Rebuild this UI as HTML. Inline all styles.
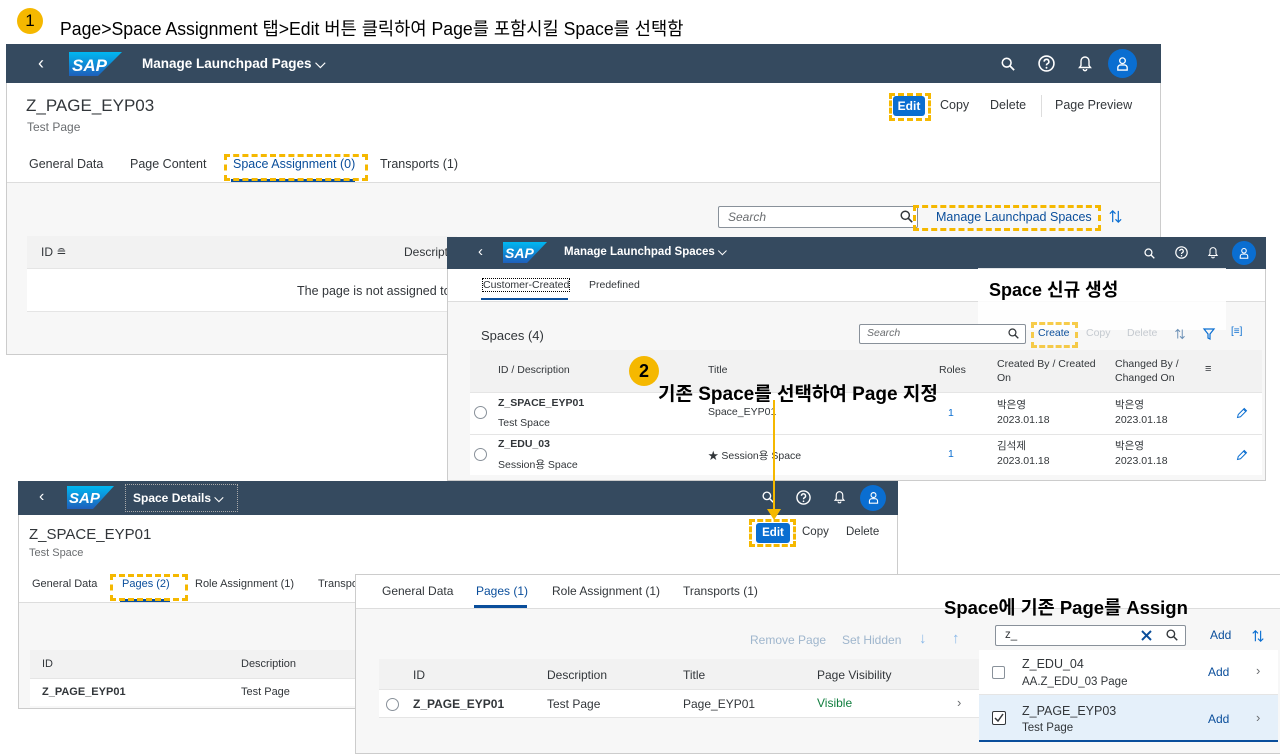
<!DOCTYPE html>
<html><head><meta charset="utf-8"><style>
*{margin:0;padding:0;box-sizing:border-box}
body{width:1280px;height:754px;position:relative;overflow:hidden;background:#fff;font-family:"Liberation Sans","Noto Sans CJK KR",sans-serif;color:#32363a;font-size:12px}
.a{position:absolute;white-space:nowrap}
.shell{position:absolute;background:#354a5f;color:#fff}
.logo{position:absolute}
.dash{position:absolute;border:3px dashed #f5b800}
.gray{color:#6a6d70}
.blue{color:#0a6ed1}
.av{position:absolute;border-radius:50%;background:#0a6ed1}
svg.i{position:absolute;overflow:visible}
</style></head><body>
<svg width="0" height="0" style="position:absolute"><defs>
<linearGradient id="g" x1="0" y1="0" x2="0" y2="1"><stop offset="0" stop-color="#00b8f1"/><stop offset="1" stop-color="#1e5fbb"/></linearGradient>
<symbol id="srch" viewBox="0 0 16 16"><circle cx="6.5" cy="6.5" r="5" fill="none" stroke="currentColor" stroke-width="1.8"/><line x1="10.2" y1="10.2" x2="15" y2="15" stroke="currentColor" stroke-width="2"/></symbol>
<symbol id="help" viewBox="0 0 16 16"><circle cx="8" cy="8" r="7" fill="none" stroke="currentColor" stroke-width="1.5"/><path d="M5.8 6.2a2.2 2.2 0 1 1 3.2 2c-.8.4-1 .8-1 1.6" fill="none" stroke="currentColor" stroke-width="1.5"/><circle cx="8" cy="12" r=".9" fill="currentColor"/></symbol>
<symbol id="bell" viewBox="0 0 16 16"><path d="M8 1.5a4 4 0 0 0-4 4v4.5l-1.5 2h11L12 10V5.5a4 4 0 0 0-4-4z" fill="none" stroke="currentColor" stroke-width="1.4"/><path d="M6.3 13.5a1.7 1.7 0 0 0 3.4 0" fill="none" stroke="currentColor" stroke-width="1.4"/></symbol>
<symbol id="user" viewBox="0 0 16 16"><circle cx="8" cy="5" r="3" fill="none" stroke="currentColor" stroke-width="1.4"/><path d="M3 15v-2.5a3 3 0 0 1 3-3h4a3 3 0 0 1 3 3V15z" fill="none" stroke="currentColor" stroke-width="1.4"/></symbol>
<symbol id="pen" viewBox="0 0 16 16"><path d="M2 14l1-4 8-8 3 3-8 8z M10 3l3 3" fill="none" stroke="currentColor" stroke-width="1.3"/></symbol>
<symbol id="sort" viewBox="0 0 16 16"><path d="M5 14V2M2 5l3-3 3 3M11 2v12M8 11l3 3 3-3" fill="none" stroke="currentColor" stroke-width="1.3"/></symbol>
</defs></svg>

<!-- title -->
<div class="a" style="left:17px;top:8px;width:26px;height:26px;border-radius:50%;background:#f5b800;text-align:center;font-size:17px;line-height:26px;color:#000">1</div>
<div class="a" style="left:60px;top:15px;font-size:18px;color:#000;transform:scaleX(.98);transform-origin:left">Page&gt;Space Assignment 탭&gt;Edit 버튼 클릭하여 Page를 포함시킬 Space를 선택함</div>

<!-- PANEL 1 -->
<div class="a" style="left:6px;top:44px;width:1155px;height:311px;border:1px solid #ccc;background:#f7f7f7"></div>
<div class="shell" style="left:6px;top:44px;width:1155px;height:39px"></div>
<div class="a" style="left:38px;top:53px;color:#fff;font-size:18px">‹</div>
<svg class="logo" style="left:69px;top:52px" width="53" height="24"><polygon points="0,0 53,0 29,24 0,24" fill="url(#g)"/><text x="3" y="19" fill="#fff" font-family="Liberation Sans" font-weight="bold" font-style="italic" font-size="17">SAP</text></svg>
<div class="a" style="left:142px;top:56px;color:#fff;font-weight:bold;font-size:13.5px">Manage Launchpad Pages ⌵</div>
<svg class="i" style="left:1001px;top:57px;color:#fff" width="14" height="14"><use href="#srch"/></svg>
<svg class="i" style="left:1038px;top:55px;color:#fff" width="17" height="17"><use href="#help"/></svg>
<svg class="i" style="left:1077px;top:55px;color:#fff" width="16" height="17"><use href="#bell"/></svg>
<div class="av" style="left:1108px;top:49px;width:29px;height:29px"></div>
<svg class="i" style="left:1115px;top:56px;color:#fff" width="15" height="15"><use href="#user"/></svg>
<div class="a" style="left:7px;top:83px;width:1153px;height:100px;background:#fff;border-bottom:1px solid #ddd"></div>
<div class="a" style="left:26px;top:96px;font-size:17px">Z_PAGE_EYP03</div>
<div class="a gray" style="left:27px;top:120px">Test Page</div>
<div class="a" style="left:893px;top:96px;width:32px;height:20px;background:#0a6ed1;color:#fff;font-weight:bold;font-size:12px;text-align:center;line-height:20px;border-radius:3px">Edit</div>
<div class="dash" style="left:889px;top:93px;width:42px;height:28px"></div>
<div class="a" style="left:940px;top:98px;font-size:12.5px">Copy</div>
<div class="a" style="left:990px;top:98px;font-size:12.5px">Delete</div>
<div class="a" style="left:1041px;top:95px;width:1px;height:22px;background:#ddd"></div>
<div class="a" style="left:1055px;top:98px;font-size:12.5px">Page Preview</div>
<div class="a" style="left:29px;top:157px;font-size:12.5px">General Data</div>
<div class="a" style="left:130px;top:157px;font-size:12.5px">Page Content</div>
<div class="a" style="left:233px;top:157px;font-size:12.5px;color:#0a4e9b">Space Assignment (0)</div>
<div class="a" style="left:231px;top:179px;width:124px;height:3px;background:#0a4e9b"></div>
<div class="dash" style="left:224px;top:154px;width:144px;height:27px"></div>
<div class="a" style="left:380px;top:157px;font-size:12.5px">Transports (1)</div>
<div class="a" style="left:718px;top:206px;width:200px;height:22px;border:1px solid #89919a;background:#fff;border-radius:2px"></div>
<div class="a" style="left:728px;top:210px;font-style:italic;color:#6a6d70">Search</div>
<svg class="i" style="left:900px;top:210px;color:#32363a" width="13" height="13"><use href="#srch"/></svg>
<div class="dash" style="left:913px;top:205px;width:188px;height:26px"></div>
<div class="a" style="left:936px;top:210px;font-size:12.5px;color:#0a4e9b">Manage Launchpad Spaces</div>
<svg class="i" style="left:1108px;top:209px;color:#0a6ed1" width="15" height="15"><use href="#sort"/></svg>
<div class="a" style="left:27px;top:236px;width:430px;height:33px;background:#f2f2f2;border-bottom:1px solid #e5e5e5"></div>
<div class="a" style="left:27px;top:269px;width:430px;height:43px;background:#fff;border-bottom:1px solid #e5e5e5"></div>
<div class="a" style="left:41px;top:245px">ID ≘</div>
<div class="a" style="left:404px;top:245px">Descript</div>
<div class="a" style="left:297px;top:284px;font-size:12.5px">The page is not assigned to</div>

<!-- PANEL 2 -->
<div class="a" style="left:447px;top:237px;width:819px;height:244px;background:#f7f7f7;border:1px solid #ccc"></div>
<div class="shell" style="left:447px;top:237px;width:819px;height:32px"></div>
<div class="a" style="left:478px;top:243px;color:#fff;font-size:15px">‹</div>
<svg class="logo" style="left:503px;top:242px" width="44" height="21"><polygon points="0,0 44,0 24,21 0,21" fill="url(#g)"/><text x="2" y="16" fill="#fff" font-family="Liberation Sans" font-weight="bold" font-style="italic" font-size="14">SAP</text></svg>
<div class="a" style="left:564px;top:246px;color:#fff;font-weight:bold;font-size:11.5px">Manage Launchpad Spaces ⌵</div>
<svg class="i" style="left:1144px;top:248px;color:#fff" width="11" height="11"><use href="#srch"/></svg>
<svg class="i" style="left:1175px;top:246px;color:#fff" width="13" height="13"><use href="#help"/></svg>
<svg class="i" style="left:1207px;top:246px;color:#fff" width="12" height="13"><use href="#bell"/></svg>
<div class="av" style="left:1232px;top:241px;width:24px;height:24px"></div>
<svg class="i" style="left:1238px;top:247px;color:#fff" width="12" height="12"><use href="#user"/></svg>
<div class="a" style="left:448px;top:269px;width:817px;height:33px;background:#fff;border-bottom:1px solid #ddd"></div>
<div class="a" style="left:483px;top:279px;font-size:10.5px;outline:1px dotted #000">Customer-Created</div>
<div class="a" style="left:481px;top:298px;width:87px;height:2px;background:#0a4e9b"></div>
<div class="a" style="left:589px;top:279px;font-size:10.5px">Predefined</div>
<div class="a" style="left:978px;top:268px;width:248px;height:62px;background:rgba(255,255,255,.85)"></div>
<div class="a" style="left:989px;top:276px;font-size:18px;font-weight:bold;color:#000">Space 신규 생성</div>
<div class="a" style="left:481px;top:328px;font-size:13px">Spaces (4)</div>
<div class="a" style="left:859px;top:324px;width:167px;height:20px;border:1px solid #89919a;background:#fff;border-radius:2px"></div>
<div class="a" style="left:867px;top:327px;font-style:italic;color:#6a6d70;font-size:10.5px">Search</div>
<svg class="i" style="left:1008px;top:328px;color:#32363a" width="11" height="11"><use href="#srch"/></svg>
<div class="dash" style="left:1031px;top:322px;width:47px;height:26px;opacity:.7"></div>
<div class="a" style="left:1038px;top:327px;font-size:10.5px;color:#0a4e9b">Create</div>
<div class="a" style="left:1086px;top:327px;font-size:10.5px;color:#c5cad0">Copy</div>
<div class="a" style="left:1127px;top:327px;font-size:10.5px;color:#c5cad0">Delete</div>
<svg class="i" style="left:1174px;top:328px;color:#6a8fb5" width="12" height="12"><use href="#sort"/></svg>
<svg class="i" style="left:1203px;top:328px" width="12" height="12"><path d="M1 1h10L7 6v5L5 10V6z" fill="none" stroke="#0a6ed1" stroke-width="1.2"/></svg>
<div class="a" style="left:1231px;top:326px;font-size:10px;color:#0a6ed1">[≡]</div>
<div class="a" style="left:470px;top:350px;width:792px;height:43px;background:#f2f2f2;border-bottom:1px solid #e5e5e5"></div>
<div class="a" style="left:470px;top:393px;width:792px;height:42px;background:#fff;border-bottom:1px solid #e5e5e5"></div>
<div class="a" style="left:470px;top:435px;width:792px;height:40px;background:#fff"></div>
<div class="a" style="left:498px;top:364px;font-size:10.5px">ID / Description</div>
<div class="a" style="left:708px;top:364px;font-size:10.5px">Title</div>
<div class="a" style="left:939px;top:364px;font-size:10.5px">Roles</div>
<div class="a" style="left:997px;top:357px;font-size:10.5px;line-height:14px">Created By / Created<br>On</div>
<div class="a" style="left:1115px;top:357px;font-size:10.5px;line-height:14px">Changed By /<br>Changed On</div>
<div class="a" style="left:1205px;top:363px;font-size:11px">≡</div>
<div class="a" style="left:474px;top:406px;width:13px;height:13px;border:1px solid #89919a;border-radius:50%;background:#fff"></div>
<div class="a" style="left:474px;top:448px;width:13px;height:13px;border:1px solid #89919a;border-radius:50%;background:#fff"></div>
<div class="a" style="left:498px;top:397px;font-size:10.5px;font-weight:bold">Z_SPACE_EYP01</div>
<div class="a" style="left:498px;top:417px;font-size:10.5px">Test Space</div>
<div class="a" style="left:708px;top:406px;font-size:10.5px">Space_EYP01</div>
<div class="a" style="left:948px;top:407px;font-size:10.5px"><span class="blue">1</span></div>
<div class="a" style="left:997px;top:398px;font-size:10.5px;line-height:15px">박은영<br>2023.01.18</div>
<div class="a" style="left:1115px;top:398px;font-size:10.5px;line-height:15px">박은영<br>2023.01.18</div>
<svg class="i" style="left:1236px;top:407px;color:#0a6ed1" width="12" height="12"><use href="#pen"/></svg>
<div class="a" style="left:498px;top:438px;font-size:10.5px;font-weight:bold">Z_EDU_03</div>
<div class="a" style="left:498px;top:457px;font-size:10.5px">Session용 Space</div>
<div class="a" style="left:708px;top:448px;font-size:10.5px">★ Session용 Space</div>
<div class="a" style="left:948px;top:448px;font-size:10.5px"><span class="blue">1</span></div>
<div class="a" style="left:997px;top:439px;font-size:10.5px;line-height:15px">김석제<br>2023.01.18</div>
<div class="a" style="left:1115px;top:439px;font-size:10.5px;line-height:15px">박은영<br>2023.01.18</div>
<svg class="i" style="left:1236px;top:449px;color:#0a6ed1" width="12" height="12"><use href="#pen"/></svg>
<div class="a" style="left:629px;top:356px;width:30px;height:30px;border-radius:50%;background:#f5b800;text-align:center;font-size:18px;line-height:30px;font-weight:bold;color:#000">2</div>
<div class="a" style="left:658px;top:379px;font-size:19px;font-weight:bold;color:#000">기존 Space를 선택하여 Page 지정</div>

<!-- PANEL 3 -->
<div class="a" style="left:18px;top:481px;width:880px;height:228px;background:#f7f7f7;border:1px solid #ccc"></div>
<div class="shell" style="left:18px;top:481px;width:880px;height:34px"></div>
<div class="a" style="left:39px;top:488px;color:#fff;font-size:16px">‹</div>
<svg class="logo" style="left:67px;top:486px" width="47" height="23"><polygon points="0,0 47,0 26,23 0,23" fill="url(#g)"/><text x="2" y="17" fill="#fff" font-family="Liberation Sans" font-weight="bold" font-style="italic" font-size="15">SAP</text></svg>
<div class="a" style="left:125px;top:484px;width:113px;height:28px;border:1px dotted #aaa"></div>
<div class="a" style="left:133px;top:491px;color:#fff;font-weight:bold;font-size:12px">Space Details ⌵</div>
<svg class="i" style="left:762px;top:491px;color:#fff" width="12" height="12"><use href="#srch"/></svg>
<svg class="i" style="left:796px;top:490px;color:#fff" width="15" height="15"><use href="#help"/></svg>
<svg class="i" style="left:833px;top:490px;color:#fff" width="13" height="14"><use href="#bell"/></svg>
<div class="av" style="left:860px;top:485px;width:26px;height:26px"></div>
<svg class="i" style="left:867px;top:491px;color:#fff" width="13" height="13"><use href="#user"/></svg>
<div class="a" style="left:19px;top:515px;width:878px;height:88px;background:#fff;border-bottom:1px solid #ddd"></div>
<div class="a" style="left:29px;top:526px;font-size:15px">Z_SPACE_EYP01</div>
<div class="a gray" style="left:29px;top:547px;font-size:11px">Test Space</div>
<div class="a" style="left:756px;top:523px;width:34px;height:20px;background:#0a6ed1;color:#fff;font-weight:bold;font-size:11.5px;text-align:center;line-height:20px;border-radius:3px">Edit</div>
<div class="dash" style="left:749px;top:519px;width:47px;height:28px"></div>
<div class="a" style="left:802px;top:526px;font-size:11.5px">Copy</div>
<div class="a" style="left:846px;top:526px;font-size:11.5px">Delete</div>
<div class="a" style="left:32px;top:578px;font-size:11px">General Data</div>
<div class="a" style="left:122px;top:578px;font-size:11px;color:#0a4e9b">Pages (2)</div>
<div class="a" style="left:120px;top:599px;width:50px;height:3px;background:#0a4e9b"></div>
<div class="dash" style="left:110px;top:574px;width:78px;height:27px"></div>
<div class="a" style="left:195px;top:578px;font-size:11px">Role Assignment (1)</div>
<div class="a" style="left:318px;top:578px;font-size:11px">Transpo</div>
<div class="a" style="left:30px;top:650px;width:330px;height:29px;background:#f2f2f2;border-bottom:1px solid #e5e5e5"></div>
<div class="a" style="left:30px;top:679px;width:330px;height:27px;background:#fff"></div>
<div class="a" style="left:42px;top:658px;font-size:11px">ID</div>
<div class="a" style="left:241px;top:658px;font-size:11px">Description</div>
<div class="a" style="left:42px;top:686px;font-size:11px;font-weight:bold">Z_PAGE_EYP01</div>
<div class="a" style="left:241px;top:686px;font-size:11px">Test Page</div>

<!-- arrow -->
<div class="a" style="left:773px;top:400px;width:1.5px;height:112px;background:#f5b800"></div>
<div class="a" style="left:767px;top:509px;width:0;height:0;border-left:7px solid transparent;border-right:7px solid transparent;border-top:11px solid #f5b800"></div>

<!-- PANEL 4 -->
<div class="a" style="left:355px;top:574px;width:930px;height:180px;background:#f7f7f7;border:1px solid #ccc"></div>
<div class="a" style="left:356px;top:575px;width:924px;height:34px;background:#fff;border-bottom:1px solid #ddd"></div>
<div class="a" style="left:382px;top:584px;font-size:12px">General Data</div>
<div class="a" style="left:476px;top:584px;font-size:12px;color:#0a4e9b">Pages (1)</div>
<div class="a" style="left:474px;top:605px;width:53px;height:3px;background:#0a4e9b"></div>
<div class="a" style="left:552px;top:584px;font-size:12px">Role Assignment (1)</div>
<div class="a" style="left:683px;top:584px;font-size:12px">Transports (1)</div>
<div class="a" style="left:944px;top:594px;font-size:18.5px;font-weight:bold;color:#000">Space에 기존 Page를 Assign</div>
<div class="a" style="left:750px;top:633px;font-size:12px;color:#9fb6cd">Remove Page</div>
<div class="a" style="left:842px;top:633px;font-size:12px;color:#9fb6cd">Set Hidden</div>
<div class="a" style="left:919px;top:630px;font-size:15px;color:#89b8e8">↓</div>
<div class="a" style="left:952px;top:630px;font-size:15px;color:#89b8e8">↑</div>
<div class="a" style="left:379px;top:659px;width:600px;height:31px;background:#f2f2f2;border-bottom:1px solid #e5e5e5"></div>
<div class="a" style="left:379px;top:690px;width:600px;height:28px;background:#fff;border-bottom:1px solid #e5e5e5"></div>
<div class="a" style="left:413px;top:668px;font-size:12px">ID</div>
<div class="a" style="left:547px;top:668px;font-size:12px">Description</div>
<div class="a" style="left:683px;top:668px;font-size:12px">Title</div>
<div class="a" style="left:817px;top:668px;font-size:12px">Page Visibility</div>
<div class="a" style="left:386px;top:698px;width:13px;height:13px;border:1px solid #89919a;border-radius:50%"></div>
<div class="a" style="left:413px;top:697px;font-size:12px;font-weight:bold">Z_PAGE_EYP01</div>
<div class="a" style="left:547px;top:697px;font-size:12px">Test Page</div>
<div class="a" style="left:683px;top:697px;font-size:12px">Page_EYP01</div>
<div class="a" style="left:817px;top:696px;font-size:12px;color:#107e3e">Visible</div>
<div class="a" style="left:957px;top:695px;font-size:13px;color:#6a6d70">›</div>
<div class="a" style="left:995px;top:625px;width:191px;height:21px;border:1px solid #89919a;background:#fff;border-radius:2px"></div>
<div class="a" style="left:1005px;top:629px;font-size:11.5px">z_</div>
<svg class="i" style="left:1141px;top:630px" width="11" height="11"><path d="M1 1l9 9M10 1l-9 9" stroke="#0a4e9b" stroke-width="2"/></svg>
<svg class="i" style="left:1166px;top:629px;color:#32363a" width="12" height="12"><use href="#srch"/></svg>
<div class="a" style="left:1210px;top:628px;font-size:12px;color:#0a4e9b">Add</div>
<svg class="i" style="left:1251px;top:629px;color:#0a6ed1" width="14" height="14"><use href="#sort"/></svg>
<div class="a" style="left:979px;top:650px;width:299px;height:45px;background:#fff;border-bottom:1px solid #e5e5e5"></div>
<div class="a" style="left:979px;top:695px;width:299px;height:47px;background:#e5f0fa;border-bottom:2px solid #0a4e9b"></div>
<div class="a" style="left:992px;top:666px;width:13px;height:13px;border:1px solid #89919a;border-radius:2px;background:#fff"></div>
<div class="a" style="left:992px;top:711px;width:14px;height:14px;border:1px solid #32363a;border-radius:2px;background:#fff"></div>
<svg class="i" style="left:994px;top:713px" width="10" height="10"><path d="M1 5l3 3 5-7" fill="none" stroke="#32363a" stroke-width="1.5"/></svg>
<div class="a" style="left:1022px;top:657px;font-size:12.5px">Z_EDU_04</div>
<div class="a" style="left:1022px;top:676px;font-size:11.5px">AA.Z_EDU_03 Page</div>
<div class="a" style="left:1022px;top:704px;font-size:12.5px">Z_PAGE_EYP03</div>
<div class="a" style="left:1022px;top:722px;font-size:11.5px">Test Page</div>
<div class="a" style="left:1208px;top:665px;font-size:12px;color:#0a4e9b">Add</div>
<div class="a" style="left:1208px;top:712px;font-size:12px;color:#0a4e9b">Add</div>
<div class="a" style="left:1256px;top:663px;font-size:13px;color:#6a6d70">›</div>
<div class="a" style="left:1256px;top:710px;font-size:13px;color:#6a6d70">›</div>
</body></html>
